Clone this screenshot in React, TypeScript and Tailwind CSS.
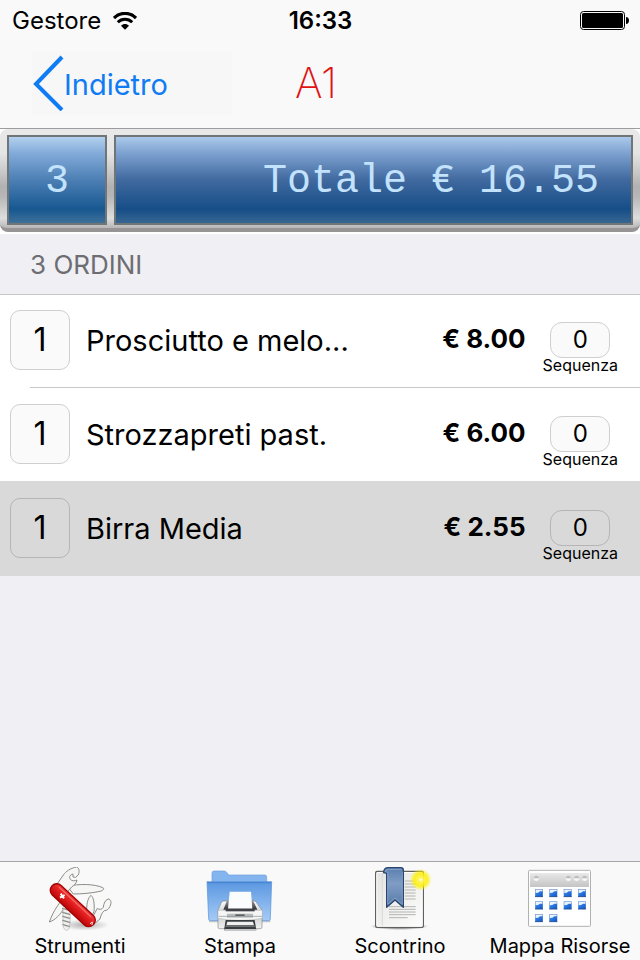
import { useState } from 'react'
import type { ReactNode } from 'react'
import { clsx } from 'clsx'

type Order = {
  id: string
  name: string
  quantity: number
  price: number
  sequence: string
}

const ORDERS: Order[] = [
  { id: 'o-1', name: 'Prosciutto e melo...', quantity: 1, price: 8, sequence: '0' },
  { id: 'o-2', name: 'Strozzapreti past.', quantity: 1, price: 6, sequence: '0' },
  { id: 'o-3', name: 'Birra Media', quantity: 1, price: 2.55, sequence: '0' },
]

function WifiIcon() {
  return (
    <svg className="h-[18px] w-6" viewBox="0 0 24 18" aria-hidden="true">
      <path d="M1 6C7.200-.2 16.800-.2 23 6" fill="none" stroke="#000" strokeWidth="3.200" />
      <path d="M4.800 10.300c4-4 10.400-4 14.400 0" fill="none" stroke="#000" strokeWidth="3" />
      <path d="M12 17.800 8 13.700c2.300-2.200 5.700-2.200 8 0z" fill="#000" />
    </svg>
  )
}

function BatteryIcon() {
  return (
    <svg className="h-5 w-[49px]" viewBox="0 0 49 20" aria-hidden="true">
      <rect x="0.5" y="0.5" width="44" height="18" rx="3" fill="none" stroke="#000" />
      <rect x="2" y="2" width="41" height="15" rx="1.500" fill="#000" />
      <path d="M46 6c4 0 4 7 0 7z" fill="#000" />
    </svg>
  )
}

function KnifeIcon() {
  return (
    <svg className="h-16 w-16" viewBox="54 36 192 192" aria-hidden="true">
      <defs>
        <linearGradient id="knifeRed" x1="0" y1="1" x2="0" y2="0">
          <stop offset="0" stopColor="#b80808" />
          <stop offset="0.5" stopColor="#e01a1c" />
          <stop offset="1" stopColor="#f0403c" />
        </linearGradient>
        <radialGradient id="knifeShade">
          <stop offset="0" stopColor="#000" stopOpacity="0.3" />
          <stop offset="1" stopColor="#000" stopOpacity="0" />
        </radialGradient>
      </defs>
      <ellipse cx="165" cy="210" rx="72" ry="17" fill="url(#knifeShade)" />
      <g fill="#f6f6f4" stroke="#8b8d88" strokeWidth="3" strokeLinejoin="round">
        <path d="M112 94c32-8 84-8 108 5 3 4-2 8-10 10-28 6-58 8-80 8z" />
        <path d="M78 92 100 60c8-11 20-20 40-24 8 3 9 14 5 24l-8 7-8-1v-9c-9 2-13 9-8 16 5 6 14 5 20 2-1 9-8 15-16 21l-14 16z" />
        <path d="M92 140c-12 14-25 36-34 61 18-6 34-23 45-43z" />
        <path d="M170 164c0-22 5-37 13-43 8 6 11 24 9 48l-6 14z" />
        <path d="m188 186 14-26c6 5 13 4 18-3 1-12 6-22 14-25 10 0 11 12 6 22-4 9-10 13-17 13-9 8-11 17-13 25l-20 17z" />
      </g>
      <path d="M100 154h18v66l-7 8c-7-4-11-10-11-20z" fill="#f0f0ee" />
      <path
        d="m98 160 21 6m-21 6 21 6m-21 6 21 6m-21 6 21 6m-20 7 18 5"
        fill="none"
        stroke="#8b8d88"
        strokeWidth="4"
        strokeLinecap="round"
      />
      <path d="M99 158v50c0 9 4 15 10 19M120 162v48c0 8-5 14-10 17" fill="none" stroke="#aaaca8" strokeWidth="2" />
      <g transform="rotate(43 128 151)">
        <rect x="43" y="131" width="170" height="39" rx="19" fill="url(#knifeRed)" stroke="#a40000" strokeWidth="4" />
        <path d="M62 139h130" stroke="#f57672" strokeWidth="3" strokeLinecap="round" />
      </g>
      <path d="m92 116 10 14M90 128l14-8" fill="none" stroke="#fff" strokeWidth="6" />
      <path d="m180 206 7-5-1 9" fill="none" stroke="#fbe8e6" strokeWidth="3" />
    </svg>
  )
}

function PrinterIcon() {
  return (
    <svg className="h-16 w-16" viewBox="54 36 192 192" overflow="visible" aria-hidden="true">
      <defs>
        <linearGradient id="folderFront" x1="0" y1="0" x2="0" y2="1">
          <stop offset="0" stopColor="#5b97e0" />
          <stop offset="1" stopColor="#a5cbf7" />
        </linearGradient>
        <linearGradient id="printerBody" x1="0" y1="0" x2="0" y2="1">
          <stop offset="0" stopColor="#fafafa" />
          <stop offset="0.5" stopColor="#c9cbcc" />
          <stop offset="1" stopColor="#f2f2f2" />
        </linearGradient>
        <linearGradient id="printerSlot" x1="0" y1="0" x2="0" y2="1">
          <stop offset="0" stopColor="#a0a4a8" />
          <stop offset="1" stopColor="#2c2f32" />
        </linearGradient>
      </defs>
      <path d="M57 199h184" stroke="#000" strokeOpacity="0.2" strokeWidth="5" />
      <path d="M66 84V54q0-6 6-6h30q6 0 9 5l5 7h108q6 0 6 6v18z" fill="#85b5ee" stroke="#6a9fdf" strokeWidth="2" />
      <path d="M51 80h194l-4 112q0 5-5 5H61q-5 0-5-5z" fill="url(#folderFront)" stroke="#568fd6" strokeWidth="2" />
      <path d="M53 83h190" stroke="#4383d3" strokeWidth="3" />
      <path d="M101 138h92q6 0 8 7l15 21v50q0 5-5 5H89q-5 0-5-5v-50l9-21q2-7 8-7z" fill="url(#printerBody)" stroke="#85898c" strokeWidth="2" />
      <path d="M112 134h76l14 30H100z" fill="url(#printerSlot)" />
      <path d="M119 110h64l4 51h-73z" fill="#fbfcfd" />
      <path d="M84 166h133v24q-30 6-67 6t-66-6z" fill="#f6f6f6" stroke="#a9acae" strokeWidth="1.500" />
      <rect x="107" y="161" width="87" height="8" fill="#3f4347" />
      <path d="M111 176h78v12h-78z" fill="#b9bcbe" />
      <path d="M136 178h28v5h-28z" fill="#5c6063" />
      <path d="M86 184h130" stroke="#888c8e" strokeWidth="2" />
      <path d="M107 195h87l5 31h-97z" fill="#383c3f" />
      <path d="M112 200h77l3 11h-83z" fill="#efefef" />
      <path d="M106 214h89" stroke="#6e7275" strokeWidth="4" />
      <path d="M103 222h95v6h-95z" fill="#c4c7c9" />
    </svg>
  )
}

function ReceiptIcon() {
  return (
    <svg className="h-16 w-16" viewBox="54 36 192 192" aria-hidden="true">
      <defs>
        <linearGradient id="pageFill" x1="0" y1="0" x2="1" y2="1">
          <stop offset="0" stopColor="#e3e3e1" />
          <stop offset="1" stopColor="#fdfdfd" />
        </linearGradient>
        <linearGradient id="ribbonFill" x1="0" y1="0" x2="0" y2="1">
          <stop offset="0" stopColor="#5b7faf" />
          <stop offset="0.4" stopColor="#7f9cc4" />
          <stop offset="1" stopColor="#5678a8" />
        </linearGradient>
        <radialGradient id="glow">
          <stop offset="0" stopColor="#fffef2" />
          <stop offset="0.2" stopColor="#fff45c" />
          <stop offset="0.6" stopColor="#fdf000" stopOpacity="0.850" />
          <stop offset="1" stopColor="#fdf000" stopOpacity="0" />
        </radialGradient>
        <radialGradient id="pageShade">
          <stop offset="0.6" stopColor="#000" stopOpacity="0.350" />
          <stop offset="1" stopColor="#000" stopOpacity="0" />
        </radialGradient>
      </defs>
      <ellipse cx="148" cy="214" rx="88" ry="11" fill="url(#pageShade)" />
      <rect x="77" y="49" width="143" height="168" rx="4" fill="url(#pageFill)" stroke="#5f615d" strokeWidth="4" />
      <rect x="80.500" y="52.500" width="136" height="161" rx="2" fill="none" stroke="#fff" strokeWidth="3" />
      <path d="M97 52v162" stroke="#d0d0ce" strokeWidth="2" />
      <path
        d="M164 78h33M164 87h33M164 96h33M164 105h33M164 114h33M164 123h33M164 132h33M117 155h80M117 163h80M117 171h80M117 179h80M117 188h56"
        stroke="#b4b5b2"
        strokeWidth="3"
      />
      <path d="M101 53q0-15 14-15h38q7 0 7 8v111l-25-22-25 22V55z" fill="url(#ribbonFill)" stroke="#28446f" strokeWidth="4" strokeLinejoin="round" />
      <path d="M105 51q2-8 10-8h40" fill="none" stroke="#9db4d5" strokeWidth="2" />
      <path d="M113 50v98l22-19 22 19V50" fill="none" stroke="#94add0" strokeWidth="2" />
      <circle cx="212" cy="74" r="33" fill="url(#glow)" />
    </svg>
  )
}

const MAP_TILES = [
  [165, 102], [208, 102], [251, 102], [294, 102],
  [165, 139], [208, 139], [251, 139], [294, 139],
  [165, 177], [208, 177],
]

function ResourceMapIcon() {
  return (
    <svg className="h-16 w-16" viewBox="144 36 192 192" aria-hidden="true">
      <defs>
        <linearGradient id="windowBar" x1="0" y1="0" x2="0" y2="1">
          <stop offset="0" stopColor="#e9e9e9" />
          <stop offset="1" stopColor="#c4c4c4" />
        </linearGradient>
        <linearGradient id="tileBlue" x1="0" y1="0" x2="1" y2="1">
          <stop offset="0" stopColor="#3d8bf2" />
          <stop offset="1" stopColor="#1156c4" />
        </linearGradient>
      </defs>
      <rect x="145.500" y="46" width="186" height="168" rx="3" fill="#fff" stroke="#b0b2af" strokeWidth="3" />
      <rect x="150" y="54" width="177" height="42" fill="url(#windowBar)" />
      {[169, 265, 290, 314].map((x) => (
        <g key={x}>
          <circle cx={x} cy="70" r="8" fill="#f6f6f6" />
          <path d={`M${x - 8} 70a8 8 0 0 1 16 0z`} fill="#bdbdbd" />
        </g>
      ))}
      {MAP_TILES.map(([x, y]) => (
        <g key={`${x}-${y}`}>
          <rect x={x + 1} y={y + 1} width="22" height="22" fill="#e9f2fc" stroke="#6f97cd" strokeWidth="2" />
          <path d={`M${x + 1} ${y + 12}l8-1 6-4h8v16H${x + 1}z`} fill="url(#tileBlue)" />
          <path d={`M${x} ${y + 23}h24`} stroke="#23477e" strokeWidth="2" />
        </g>
      ))}
    </svg>
  )
}

const TABS: { label: string; icon: ReactNode }[] = [
  { label: 'Strumenti', icon: <KnifeIcon /> },
  { label: 'Stampa', icon: <PrinterIcon /> },
  { label: 'Scontrino', icon: <ReceiptIcon /> },
  { label: 'Mappa Risorse', icon: <ResourceMapIcon /> },
]

function Header() {
  return (
    <header className="border-b border-[#9c9c9e] bg-[#f9f9f9]">
      <div className="grid h-[42px] grid-cols-3 items-center pr-[11px] pl-3">
        <div className="flex items-center gap-3 text-2xl">
          Gestore
          <WifiIcon />
        </div>
        <div className="text-center text-2xl font-semibold">16:33</div>
        <div className="flex justify-end">
          <BatteryIcon />
        </div>
      </div>
      <div className="grid h-[86px] grid-cols-[1fr_auto_1fr] items-center pr-10 pb-1 pl-8">
        <button type="button" className="flex h-16 w-[200px] items-center bg-[#f7f7f7] text-[29px] text-[#0f7cf3]">
          <svg className="h-14 w-8" viewBox="0 0 32 56" fill="none" stroke="currentColor" strokeWidth="4" aria-hidden="true">
            <path d="M30 2 4 29l26 26" />
          </svg>
          <span className="pt-1">Indietro</span>
        </button>
        <h1 className="text-[42px] leading-10 font-extralight text-[#e01212]">A1</h1>
      </div>
    </header>
  )
}

function TotalDisplay({ count, total }: { count: number; total: number }) {
  return (
    <div className="bg-white pb-0.5">
      <div className="flex gap-[7px] rounded-lg border-b-4 border-[#969495] bg-linear-[to_bottom,#e9e9e9_0%,#e4e4e4_25%,#b2b2b2_58%,#b6b6b6_68%,#dedede_90%,#b8b6b7_100%] px-[7px] pt-1.5 pb-[3px] font-['Liberation_Mono',monospace] text-[40px] text-[#c3e2fb]">
        <div className="flex h-[90px] w-[100px] items-center justify-center border-2 border-[#707678] bg-linear-[to_bottom,#b3d0ee_0%,#80a9d8_20%,#4c7fb4_50%,#175891_84%,#3f7099_100%] pt-1">
          {count}
        </div>
        <div className="flex h-[90px] min-w-0 flex-1 items-center justify-end border-2 border-[#707678] bg-linear-[to_bottom,#abc9eb_0%,#7b9fce_20%,#40699f_50%,#164e87_84%,#386692_100%] pt-1 pr-8">
          <span className="truncate">Totale € {total.toFixed(2)}</span>
        </div>
      </div>
    </div>
  )
}

type OrderRowProps = {
  order: Order
  selected: boolean
  nextSelected: boolean
  onSelect: () => void
  onSequenceChange: (value: string) => void
}

function OrderRow({ order, selected, nextSelected, onSelect, onSequenceChange }: OrderRowProps) {
  return (
    <li className={selected ? 'bg-[#d9d9d9]' : 'bg-white'} onClick={onSelect}>
      <div className="flex h-[93px] items-start pt-4 pr-[22px] pl-2.5">
        <button
          type="button"
          aria-label={`Quantità ${order.name}`}
          className={clsx(
            'h-[60px] w-[60px] shrink-0 rounded-[10px] border text-[32px]',
            selected ? 'border-[#b5b5b5] bg-[#d9d9d9]' : 'border-[#cfcfcf] bg-[#fafafa]'
          )}
        >
          {order.quantity}
        </button>
        <span className="ml-4 min-w-0 flex-1 truncate text-[29px] leading-[62px]">{order.name}</span>
        <span className="mr-[17px] shrink-0 text-[26px] leading-[58px] font-bold">€ {order.price.toFixed(2)}</span>
        <div className="mt-3 flex shrink-0 flex-col items-center">
          <input
            id={`seq-${order.id}`}
            type="text"
            inputMode="numeric"
            value={order.sequence}
            onChange={(e) => onSequenceChange(e.target.value)}
            className={clsx(
              'h-9 w-[60px] rounded-xl border pb-0.5 text-center text-2xl',
              selected ? 'border-[#b5b5b5] bg-[#d9d9d9]' : 'border-[#cfcfcf] bg-[#fafafa]'
            )}
          />
          <label htmlFor={`seq-${order.id}`} className="text-base leading-[14px]">
            Sequenza
          </label>
        </div>
      </div>
      <div className={clsx('h-px', selected || nextSelected ? 'bg-[#d9d9d9]' : 'ml-[30px] bg-[#c8c7cc]')} />
    </li>
  )
}

function TabBar() {
  return (
    <nav className="grid grid-cols-4 border-t border-[#a5a5a9] bg-[#f9f9f9]">
      {TABS.map((tab) => (
        <button key={tab.label} type="button" className="flex flex-col items-center pt-[5px] text-xl">
          {tab.icon}
          <span className="pt-0.5 leading-[27px] whitespace-nowrap">{tab.label}</span>
        </button>
      ))}
    </nav>
  )
}

export default function App() {
  const [orders, setOrders] = useState(ORDERS)
  const [selectedId, setSelectedId] = useState('o-3')

  const total = orders.reduce((sum, o) => sum + o.price * o.quantity, 0)

  function setSequence(id: string, sequence: string) {
    setOrders((prev) => prev.map((o) => (o.id === id ? { ...o, sequence } : o)))
  }

  return (
    <div className="flex min-h-screen flex-col bg-[#efeff4] font-[Inter,sans-serif] text-black">
      <Header />
      <TotalDisplay count={orders.length} total={total} />
      <main className="flex-1">
        <h2 className="relative border-b border-[#c8c7cc] px-[30px] pt-0.5 text-[26px] leading-[58px] text-[#6d6d72]">
          {orders.length} ORDINI
        </h2>
        <ul className="-mt-px">
          {orders.map((order, i) => (
            <OrderRow
              key={order.id}
              order={order}
              selected={order.id === selectedId}
              nextSelected={orders[i + 1]?.id === selectedId}
              onSelect={() => setSelectedId(order.id)}
              onSequenceChange={(value) => setSequence(order.id, value)}
            />
          ))}
        </ul>
      </main>
      <TabBar />
    </div>
  )
}
